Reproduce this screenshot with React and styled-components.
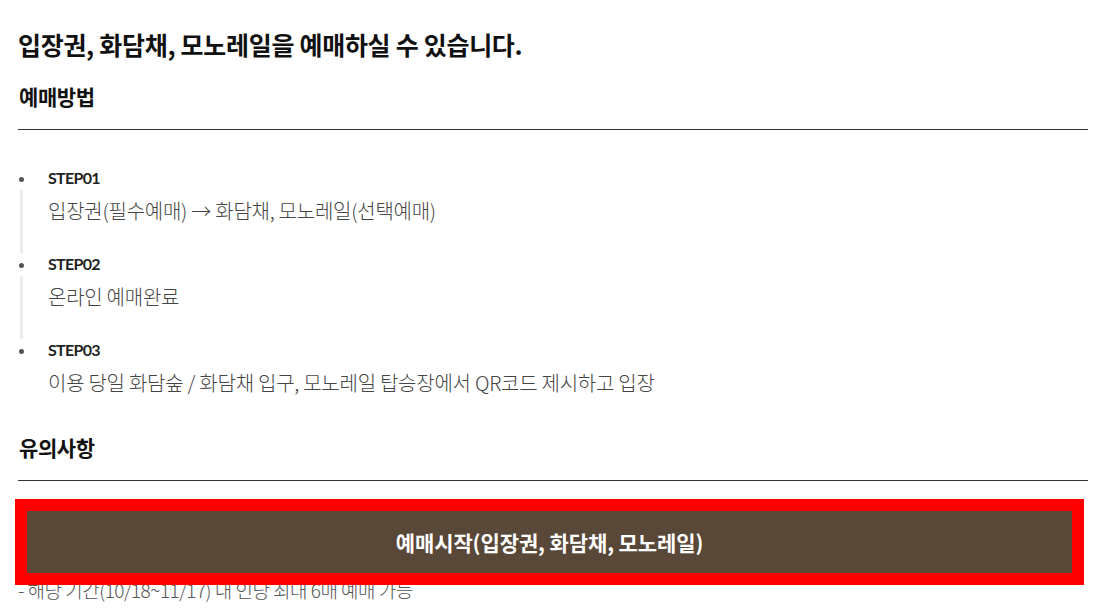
import React from 'react';
import styled, { createGlobalStyle } from 'styled-components';

const GlobalStyle = createGlobalStyle`
    html, body {
        margin: 0;
        padding: 0;
        background: #ffffff;
        overflow: hidden;
    }
    body {
        font-family: "Noto Sans CJK KR", "Noto Sans", sans-serif;
        color: #222;
    }
`

const Page = styled.div`
    width: 1070px;
    padding: 29px 21px 0 18px;
`

const Title = styled.h2`
    margin: 0;
    font-size: 25px;
    line-height: 30px;
    font-weight: 700;
    letter-spacing: -0.3px;
    color: #111;
`

const SectionHead = styled.h3`
    margin: ${props => props.top}px 0 0;
    padding: 0 1px 21px;
    font-size: 21px;
    line-height: 24px;
    font-weight: 700;
    letter-spacing: -0.4px;
    color: #111;
    border-bottom: 1px solid #333;
`

const StepList = styled.ul`
    list-style: none;
    margin: 38px 0 0;
    padding: 0;
`

const StepItem = styled.li`
    position: relative;
    padding-left: 30px;
    padding-bottom: ${props => props.last ? 0 : 29}px;

    &::before {
        content: '';
        position: absolute;
        left: 1px;
        top: 9px;
        width: 5px;
        height: 5px;
        border-radius: 50%;
        background: #555;
    }

    &::after {
        content: '';
        display: ${props => props.last ? 'none' : 'block'};
        position: absolute;
        left: 2px;
        top: 22px;
        width: 3px;
        height: 63px;
        background: #ececec;
    }
`

const StepLabel = styled.strong`
    display: block;
    font-family: "Lato", "Noto Sans CJK KR", sans-serif;
    font-size: 16px;
    line-height: 20px;
    font-weight: 700;
    letter-spacing: -0.7px;
    color: #222;
`

const StepText = styled.p`
    margin: 9px 0 0;
    font-size: 20px;
    line-height: 28px;
    font-weight: 300;
    letter-spacing: -0.25px;
    color: #444;
`

const NoteList = styled.ul`
    list-style: none;
    margin: 95px 0 0;
    padding: 0;
`

const NoteItem = styled.li`
    font-size: 19px;
    line-height: 28px;
    font-weight: 300;
    letter-spacing: -0.5px;
    color: #555;
`

const BookButton = styled.button`
    position: fixed;
    left: 27px;
    bottom: 35px;
    width: 1045px;
    height: 62px;
    border: 0;
    outline: 12px solid #ff0000;
    background: #594737;
    color: #fff;
    font-family: "Noto Sans CJK KR", sans-serif;
    font-size: 21px;
    font-weight: 700;
    letter-spacing: -0.1px;
    cursor: pointer;
`

const steps = [
    { label: 'STEP01', text: '입장권(필수예매) → 화담채, 모노레일(선택예매)' },
    { label: 'STEP02', text: '온라인 예매완료' },
    { label: 'STEP03', text: '이용 당일 화담숲 / 화담채 입구, 모노레일 탑승장에서 QR코드 제시하고 입장' },
];

function App() {
    return (
        <>
            <GlobalStyle />
            <Page>
                <Title>입장권, 화담채, 모노레일을 예매하실 수 있습니다.</Title>
                <SectionHead top={25}>예매방법</SectionHead>
                <StepList>
                    {steps.map((step, i) => (
                        <StepItem key={step.label} last={i === steps.length - 1}>
                            <StepLabel>{step.label}</StepLabel>
                            <StepText>{step.text}</StepText>
                        </StepItem>
                    ))}
                </StepList>
                <SectionHead top={38}>유의사항</SectionHead>
                <NoteList>
                    <NoteItem>- 해당 기간(10/18~11/17) 내 인당 최대 6매 예매 가능</NoteItem>
                </NoteList>
            </Page>
            <BookButton>예매시작(입장권, 화담채, 모노레일)</BookButton>
        </>
    )
}

export default App
